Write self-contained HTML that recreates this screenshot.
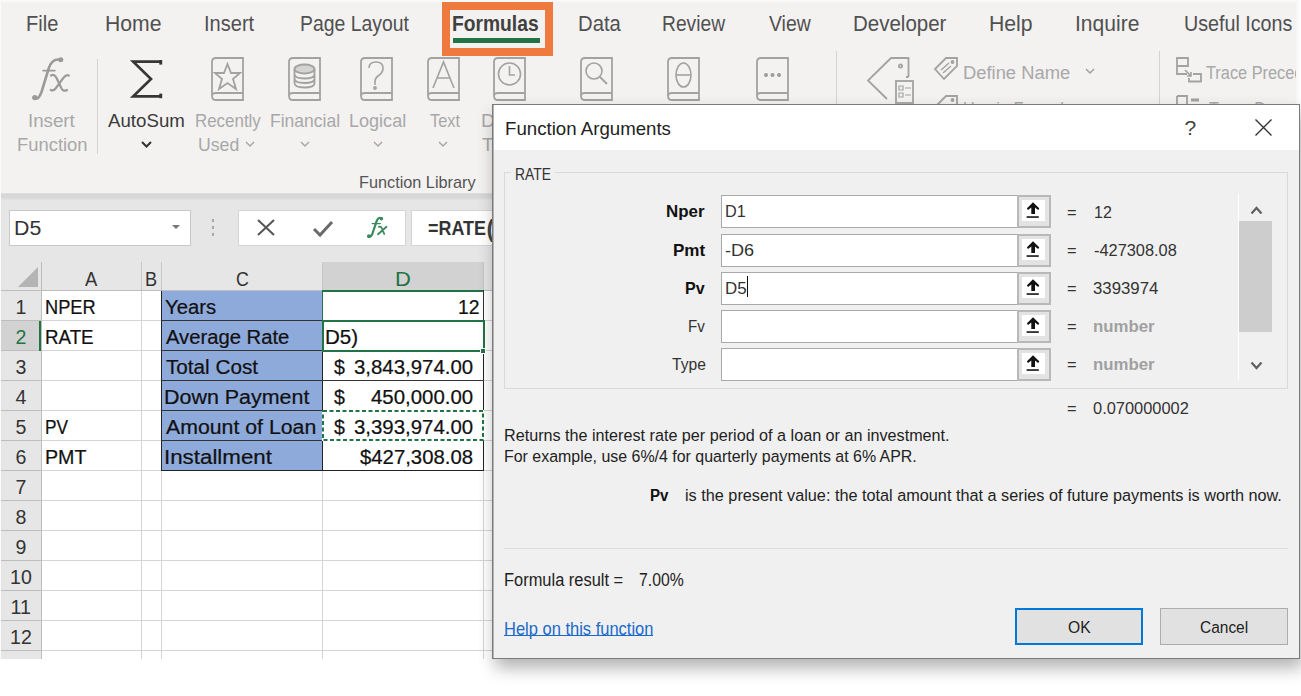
<!DOCTYPE html>
<html><head><meta charset="utf-8">
<style>
html,body{margin:0;padding:0;}
body{width:1301px;height:696px;overflow:hidden;position:relative;background:#fff;font-family:"Liberation Sans",sans-serif;}
.a{position:absolute;box-sizing:border-box;}
.t{position:absolute;line-height:1;white-space:pre;transform-origin:0 50%;font-family:"Liberation Sans",sans-serif;}
svg{position:absolute;overflow:visible;}
</style></head><body>
<!-- ribbon -->
<div class="a" style="left:0;top:0;width:1296px;height:193px;background:#f3f2f1"></div>
<div class="a" style="left:442px;top:2px;width:111px;height:54px;border:8px solid #ee7a3f"></div>
<div class="a" style="left:453px;top:38px;width:87px;height:5px;background:#217346"></div>
<div class="a" style="left:97px;top:59px;width:1px;height:95px;background:#d2d2d2"></div>
<div class="a" style="left:836px;top:51px;width:1px;height:53px;background:#d2d2d2"></div>
<div class="a" style="left:1159px;top:51px;width:1px;height:53px;background:#d2d2d2"></div>
<!-- fx icon -->
<svg style="left:25px;top:50px" width="50" height="55" viewBox="25 50 50 55"><g stroke="#9a9a9a" fill="none" stroke-linecap="round"><path d="M34.5,98 Q38.5,100.5 41.5,92 L49,67.5 Q52.5,58 60.5,59.8" stroke-width="2.6"/><path d="M43.2,70.6 H54.8" stroke-width="1.8"/><path d="M51,75.5 Q54.5,73.5 56.8,78.5 L61.5,88.5 Q63.5,92 67,90" stroke-width="2.2"/><path d="M68.8,75.5 Q66,74 63.2,78.2 L56,88 Q53.5,91.5 50.8,90" stroke-width="2.2"/></g><g fill="#9a9a9a"><circle cx="34.8" cy="97.6" r="2.7"/><circle cx="60.8" cy="59.8" r="2.5"/></g></svg>
<!-- sigma -->
<svg style="left:128px;top:56px" width="38" height="45" viewBox="128 56 38 45"><path d="M161.5,61.7 H133.2 L151,79 L133.2,96.3 H161.5" fill="none" stroke="#363636" stroke-width="2.7" stroke-linejoin="miter" stroke-miterlimit="6"/><rect x="159.3" y="60" width="2.9" height="4.6" fill="#363636"/><rect x="159.3" y="93.6" width="2.9" height="4.6" fill="#363636"/></svg>
<!-- books -->
<svg style="left:210px;top:56px" width="36" height="46" viewBox="0 0 36 46"><g fill="none" stroke="#a2a2a2" stroke-width="1.8"><path d="M2,40 V6 Q2,2 6,2 H33 V44 H6 Q2,44 2,40 Q2,37 6,37 H33"/><path d="M17.5,8 L21,17 L30,17 L23,23 L26,33 L17.5,27 L9,33 L12,23 L5,17 L14,17 Z" stroke-width="1.8"/></g></svg>
<svg style="left:287px;top:56px" width="36" height="46" viewBox="0 0 36 46"><g fill="none" stroke="#a2a2a2" stroke-width="1.8"><path d="M2,40 V6 Q2,2 6,2 H33 V44 H6 Q2,44 2,40 Q2,37 6,37 H33"/><ellipse cx="17.5" cy="13" rx="10" ry="4.5" fill="#d4d4d4"/><path d="M7.5,13 V27 Q7.5,31.5 17.5,31.5 Q27.5,31.5 27.5,27 V13 M7.5,18 Q7.5,22.5 17.5,22.5 Q27.5,22.5 27.5,18 M7.5,22.5 Q7.5,27 17.5,27 Q27.5,27 27.5,22.5"/></g></svg>
<svg style="left:359px;top:56px" width="36" height="46" viewBox="0 0 36 46"><g fill="none" stroke="#a2a2a2" stroke-width="1.8"><path d="M2,40 V6 Q2,2 6,2 H33 V44 H6 Q2,44 2,40 Q2,37 6,37 H33"/><path d="M10,12 Q10,6 17,6 Q24,6 24,12 Q24,17 19,20 Q16,22 16,26 V29" stroke-width="1.6"/><circle cx="16" cy="32" r="1" fill="#9c9c9c"/></g></svg>
<svg style="left:426px;top:56px" width="36" height="46" viewBox="0 0 36 46"><g fill="none" stroke="#a2a2a2" stroke-width="1.8"><path d="M2,40 V6 Q2,2 6,2 H33 V44 H6 Q2,44 2,40 Q2,37 6,37 H33"/><path d="M7,32 L17.5,6 L28,32 M11,22 H24" stroke-width="1.6"/></g></svg>
<svg style="left:492px;top:56px" width="36" height="46" viewBox="0 0 36 46"><g fill="none" stroke="#a2a2a2" stroke-width="1.8"><path d="M2,40 V6 Q2,2 6,2 H33 V44 H6 Q2,44 2,40 Q2,37 6,37 H33"/><circle cx="17.5" cy="18" r="11" stroke-width="1.6"/><path d="M17.5,10 V19 H23" stroke-width="1.6"/></g></svg>
<svg style="left:579px;top:56px" width="36" height="46" viewBox="0 0 36 46"><g fill="none" stroke="#a2a2a2" stroke-width="1.8"><path d="M2,40 V6 Q2,2 6,2 H33 V44 H6 Q2,44 2,40 Q2,37 6,37 H33"/><circle cx="15" cy="15" r="8" stroke-width="1.6"/><path d="M20.5,20.5 L28,28" stroke-width="1.8"/></g></svg>
<svg style="left:666px;top:56px" width="36" height="46" viewBox="0 0 36 46"><g fill="none" stroke="#a2a2a2" stroke-width="1.8"><path d="M2,40 V6 Q2,2 6,2 H33 V44 H6 Q2,44 2,40 Q2,37 6,37 H33"/><ellipse cx="17.5" cy="19" rx="7.5" ry="12" stroke-width="1.6"/><path d="M10,19 H25" stroke-width="1.6"/></g></svg>
<svg style="left:755px;top:56px" width="36" height="46" viewBox="0 0 36 46"><g fill="none" stroke="#a2a2a2" stroke-width="1.8"><path d="M2,40 V6 Q2,2 6,2 H33 V44 H6 Q2,44 2,40 Q2,37 6,37 H33"/></g><g fill="#9c9c9c"><circle cx="11" cy="19" r="2"/><circle cx="17.5" cy="19" r="2"/><circle cx="24" cy="19" r="2"/></g></svg>
<!-- name manager big tag -->
<svg style="left:866px;top:56px" width="50" height="50" viewBox="0 0 50 50"><g fill="none" stroke="#a2a2a2" stroke-width="1.8"><path d="M42.5,21 H40 M42.5,21 V2 H25 L2,24.5 L21,43"/><circle cx="34.5" cy="10" r="1.6"/><rect x="30" y="25" width="17" height="22"/><path d="M33,30 h4 v4 h-4 z M33,37 h4 v4 h-4 z M39,32 h6 M39,39 h6" stroke-width="1.2"/></g></svg>
<!-- define name small tag -->
<svg style="left:933px;top:56px" width="26" height="26" viewBox="0 0 26 26"><g fill="none" stroke="#a2a2a2" stroke-width="1.8"><path d="M24,2 H13 L2,13 L11,23 L24,10 Z"/><circle cx="19.5" cy="6" r="1" fill="#9c9c9c"/><path d="M8,14 L16,7 M10,17 L18,10" stroke-width="1.4"/></g></svg>
<svg style="left:933px;top:94px" width="26" height="26" viewBox="0 0 26 26"><g fill="none" stroke="#a2a2a2" stroke-width="1.8"><path d="M24,2 H13 L2,13 L11,23 L24,10 Z"/><circle cx="19.5" cy="6" r="1" fill="#9c9c9c"/></g></svg>
<svg style="left:1085px;top:68px" width="10" height="6" viewBox="0 0 10 6"><path d="M1,1 L5,5 L9,1" fill="none" stroke="#a0a0a0" stroke-width="1.5"/></svg>
<!-- trace precedents -->
<svg style="left:1175px;top:56px" width="28" height="28" viewBox="0 0 28 28"><g fill="none" stroke="#a2a2a2" stroke-width="1.8"><path d="M2,2 H13 V10 H2 Z M2,10 V18 H12"/><path d="M10,14 L16,20 M12,20 H16 V16" stroke-width="1.6"/><path d="M18,18 H26 V25.5 H14 V22"/></g></svg>
<svg style="left:1175px;top:94px" width="28" height="12" viewBox="0 0 28 12"><g fill="none" stroke="#a2a2a2" stroke-width="1.8"><path d="M2,2 H12 V12 M2,2 V12"/><path d="M16,6 H24" stroke-width="3"/></g></svg>
<!-- chevrons -->
<svg style="left:141px;top:141px" width="11" height="7" viewBox="0 0 11 7"><path d="M1,1 L5.5,5.5 L10,1" fill="none" stroke="#333" stroke-width="2"/></svg>
<svg style="left:245px;top:141px" width="10" height="7" viewBox="0 0 10 7"><path d="M1,1 L5,5 L9,1" fill="none" stroke="#a8a8a8" stroke-width="1.5"/></svg>
<svg style="left:300px;top:141px" width="10" height="7" viewBox="0 0 10 7"><path d="M1,1 L5,5 L9,1" fill="none" stroke="#a8a8a8" stroke-width="1.5"/></svg>
<svg style="left:373px;top:141px" width="10" height="7" viewBox="0 0 10 7"><path d="M1,1 L5,5 L9,1" fill="none" stroke="#a8a8a8" stroke-width="1.5"/></svg>
<svg style="left:438px;top:141px" width="10" height="7" viewBox="0 0 10 7"><path d="M1,1 L5,5 L9,1" fill="none" stroke="#a8a8a8" stroke-width="1.5"/></svg>

<!-- formula bar -->
<div class="a" style="left:0;top:193px;width:1296px;height:69px;background:#e6e6e6"></div>
<div class="a" style="left:0;top:193px;width:1296px;height:7px;background:linear-gradient(#e2e2e2 0px,#d6d6d6 1.5px,#d8d8d8 5px,#e4e4e4 7px)"></div>
<div class="a" style="left:9px;top:210px;width:182px;height:36px;background:#fff;border:1px solid #c8c8c8"></div>
<svg style="left:171px;top:224px" width="10" height="6" viewBox="0 0 10 6"><path d="M1,1 H9 L5,5 Z" fill="#777"/></svg>
<div class="a" style="left:212px;top:219px;width:2px;height:3px;background:#a8a8a8"></div>
<div class="a" style="left:212px;top:226px;width:2px;height:3px;background:#a8a8a8"></div>
<div class="a" style="left:212px;top:233px;width:2px;height:3px;background:#a8a8a8"></div>
<div class="a" style="left:238px;top:210px;width:168px;height:36px;background:#fff;border:1px solid #d4d4d4"></div>
<svg style="left:256px;top:219px" width="20" height="17" viewBox="0 0 20 17"><path d="M2,1 L18,16 M18,1 L2,16" fill="none" stroke="#555" stroke-width="2"/></svg>
<svg style="left:312px;top:220px" width="22" height="17" viewBox="0 0 22 17"><path d="M2,9 L8,15 L20,2" fill="none" stroke="#6a6a6a" stroke-width="3"/></svg>
<svg style="left:360px;top:212px" width="32" height="30" viewBox="360 212 32 30"><g stroke="#3b8a5c" fill="none" stroke-linecap="round"><path d="M368.5,236.5 Q371.5,237.5 373,232 L376.5,221.5 Q378.5,216.5 381.5,218.2" stroke-width="2.2"/><path d="M372.2,223.6 H380.3" stroke-width="1.4"/><path d="M378.8,226.8 Q381,226 382,228.5 L384.2,234 M386.5,226.8 L378,234.2" stroke-width="1.8"/></g><g fill="#3b8a5c"><circle cx="368.9" cy="236.2" r="1.9"/><circle cx="381.4" cy="218.7" r="1.8"/></g></svg>
<div class="a" style="left:411px;top:210px;width:100px;height:36px;background:#fff;border:1px solid #d4d4d4"></div>

<!-- sheet -->
<div class="a" style="left:0;top:262px;width:1296px;height:397px;background:#fff"></div>
<div class="a" style="left:0;top:262px;width:1296px;height:29px;background:#e6e6e6"></div>
<div class="a" style="left:322px;top:262px;width:162px;height:29px;background:#d2d2d2"></div>
<div class="a" style="left:0;top:262px;width:41px;height:397px;background:#e6e6e6"></div>
<div class="a" style="left:0;top:321px;width:41px;height:30px;background:#d2d2d2"></div>
<svg style="left:17px;top:266px" width="22" height="22" viewBox="0 0 22 22"><path d="M21,1 V21 H1 Z" fill="#b4b4b4"/></svg>
<!-- gridlines -->
<div id="grid"></div>
<div class="a" style="left:41px;top:290px;width:1255px;height:1px;background:#d4d4d4"></div>
<div class="a" style="left:0;top:290px;width:41px;height:1px;background:#bdbdbd"></div>
<div class="a" style="left:41px;top:320px;width:1255px;height:1px;background:#d4d4d4"></div>
<div class="a" style="left:0;top:320px;width:41px;height:1px;background:#bdbdbd"></div>
<div class="a" style="left:41px;top:350px;width:1255px;height:1px;background:#d4d4d4"></div>
<div class="a" style="left:0;top:350px;width:41px;height:1px;background:#bdbdbd"></div>
<div class="a" style="left:41px;top:380px;width:1255px;height:1px;background:#d4d4d4"></div>
<div class="a" style="left:0;top:380px;width:41px;height:1px;background:#bdbdbd"></div>
<div class="a" style="left:41px;top:410px;width:1255px;height:1px;background:#d4d4d4"></div>
<div class="a" style="left:0;top:410px;width:41px;height:1px;background:#bdbdbd"></div>
<div class="a" style="left:41px;top:440px;width:1255px;height:1px;background:#d4d4d4"></div>
<div class="a" style="left:0;top:440px;width:41px;height:1px;background:#bdbdbd"></div>
<div class="a" style="left:41px;top:470px;width:1255px;height:1px;background:#d4d4d4"></div>
<div class="a" style="left:0;top:470px;width:41px;height:1px;background:#bdbdbd"></div>
<div class="a" style="left:41px;top:500px;width:1255px;height:1px;background:#d4d4d4"></div>
<div class="a" style="left:0;top:500px;width:41px;height:1px;background:#bdbdbd"></div>
<div class="a" style="left:41px;top:530px;width:1255px;height:1px;background:#d4d4d4"></div>
<div class="a" style="left:0;top:530px;width:41px;height:1px;background:#bdbdbd"></div>
<div class="a" style="left:41px;top:560px;width:1255px;height:1px;background:#d4d4d4"></div>
<div class="a" style="left:0;top:560px;width:41px;height:1px;background:#bdbdbd"></div>
<div class="a" style="left:41px;top:590px;width:1255px;height:1px;background:#d4d4d4"></div>
<div class="a" style="left:0;top:590px;width:41px;height:1px;background:#bdbdbd"></div>
<div class="a" style="left:41px;top:620px;width:1255px;height:1px;background:#d4d4d4"></div>
<div class="a" style="left:0;top:620px;width:41px;height:1px;background:#bdbdbd"></div>
<div class="a" style="left:41px;top:650px;width:1255px;height:1px;background:#d4d4d4"></div>
<div class="a" style="left:0;top:650px;width:41px;height:1px;background:#bdbdbd"></div>
<div class="a" style="left:0;top:290px;width:1296px;height:1px;background:#bdbdbd"></div>
<div class="a" style="left:141px;top:291px;width:1px;height:368px;background:#d4d4d4"></div>
<div class="a" style="left:141px;top:262px;width:1px;height:28px;background:#c6c6c6"></div>
<div class="a" style="left:161px;top:291px;width:1px;height:368px;background:#d4d4d4"></div>
<div class="a" style="left:161px;top:262px;width:1px;height:28px;background:#c6c6c6"></div>
<div class="a" style="left:322px;top:291px;width:1px;height:368px;background:#d4d4d4"></div>
<div class="a" style="left:322px;top:262px;width:1px;height:28px;background:#c6c6c6"></div>
<div class="a" style="left:483px;top:291px;width:1px;height:368px;background:#d4d4d4"></div>
<div class="a" style="left:483px;top:262px;width:1px;height:28px;background:#c6c6c6"></div>
<div class="a" style="left:41px;top:262px;width:1px;height:397px;background:#bdbdbd"></div>
<!-- C blue block -->
<div class="a" style="left:161px;top:291px;width:162px;height:180px;background:#8eaadb;border:1px solid #222;border-top:none"></div>
<div class="a" style="left:161px;top:320px;width:162px;height:1px;background:#333"></div>
<div class="a" style="left:161px;top:350px;width:162px;height:1px;background:#333"></div>
<div class="a" style="left:161px;top:380px;width:162px;height:1px;background:#333"></div>
<div class="a" style="left:161px;top:410px;width:162px;height:1px;background:#333"></div>
<div class="a" style="left:161px;top:440px;width:162px;height:1px;background:#333"></div>
<!-- D cells borders -->
<div class="a" style="left:322px;top:350px;width:162px;height:121px;border:1px solid #222;border-top:none"></div>
<div class="a" style="left:322px;top:380px;width:162px;height:1px;background:#333"></div>
<div class="a" style="left:322px;top:410px;width:162px;height:1px;background:#333"></div>
<div class="a" style="left:322px;top:440px;width:162px;height:1px;background:#333"></div>
<div class="a" style="left:322px;top:290px;width:162px;height:2px;background:#217346"></div>
<div class="a" style="left:322px;top:290px;width:162px;height:31px;border:1px solid #217346;border-top:none;border-right-color:#333"></div>
<div class="a" style="left:322px;top:320px;width:163px;height:32px;border:2px solid #217346"></div>
<div class="a" style="left:480px;top:348px;width:6px;height:6px;background:#217346;border:1px solid #fff"></div>
<div class="a" style="left:39px;top:321px;width:2px;height:30px;background:#217346"></div>
<div class="a" style="left:322px;top:410px;width:162px;height:31px;background:#fff"></div>
<svg style="left:322px;top:410px" width="162" height="31" viewBox="0 0 162 31"><rect x="1" y="1" width="160" height="29" fill="none" stroke="#217346" stroke-width="2" stroke-dasharray="4 2.5"/></svg>

<span class="t" style="left:26.16px;top:13.00px;font-size:21.74px;color:#505050;transform:scaleX(0.9219);">File</span>
<span class="t" style="left:105.05px;top:13.00px;font-size:21.74px;color:#505050;transform:scaleX(0.9745);">Home</span>
<span class="t" style="left:204.15px;top:13.00px;font-size:21.74px;color:#505050;transform:scaleX(0.9231);">Insert</span>
<span class="t" style="left:300.22px;top:13.00px;font-size:21.74px;color:#505050;transform:scaleX(0.8917);">Page Layout</span>
<span class="t" style="left:452.11px;top:13.00px;font-size:21.74px;color:#404040;font-weight:700;transform:scaleX(0.8854);">Formulas</span>
<span class="t" style="left:578.14px;top:13.00px;font-size:21.74px;color:#505050;transform:scaleX(0.9318);">Data</span>
<span class="t" style="left:662.23px;top:13.00px;font-size:21.74px;color:#505050;transform:scaleX(0.8841);">Review</span>
<span class="t" style="left:769.00px;top:13.00px;font-size:21.74px;color:#505050;transform:scaleX(0.8936);">View</span>
<span class="t" style="left:852.61px;top:13.00px;font-size:21.74px;color:#505050;transform:scaleX(0.9433);">Developer</span>
<span class="t" style="left:989.05px;top:13.00px;font-size:21.74px;color:#505050;transform:scaleX(0.9762);">Help</span>
<span class="t" style="left:1075.06px;top:13.00px;font-size:21.74px;color:#505050;transform:scaleX(0.9688);">Inquire</span>
<span class="t" style="left:1184.19px;top:13.00px;font-size:21.74px;color:#505050;transform:scaleX(0.9060);">Useful Icons</span>
<span class="t" style="left:27.58px;top:112.00px;font-size:18.55px;color:#a8a8a8;transform:scaleX(1.0091);">Insert</span>
<span class="t" style="left:16.62px;top:136.00px;font-size:18.84px;color:#a8a8a8;transform:scaleX(0.9771);">Function</span>
<span class="t" style="left:108.00px;top:112.00px;font-size:18.55px;color:#3a3a3a;transform:scaleX(1.0080);">AutoSum</span>
<span class="t" style="left:194.69px;top:112.00px;font-size:18.55px;color:#a8a8a8;transform:scaleX(0.9127);">Recently</span>
<span class="t" style="left:198.06px;top:136.00px;font-size:18.84px;color:#a8a8a8;transform:scaleX(0.9381);">Used</span>
<span class="t" style="left:270.31px;top:112.00px;font-size:18.55px;color:#a8a8a8;transform:scaleX(0.9444);">Financial</span>
<span class="t" style="left:349.03px;top:112.00px;font-size:18.55px;color:#a8a8a8;transform:scaleX(0.9737);">Logical</span>
<span class="t" style="left:429.50px;top:112.00px;font-size:18.55px;color:#a8a8a8;transform:scaleX(0.8824);">Text</span>
<span class="t" style="left:481.46px;top:112.00px;font-size:18.55px;color:#a8a8a8;transform:scaleX(1.0417);">D</span>
<span class="t" style="left:482.00px;top:136.00px;font-size:18.84px;color:#a8a8a8;">T</span>
<span class="t" style="left:358.56px;top:174.00px;font-size:17.39px;color:#555;transform:scaleX(0.9355);">Function Library</span>
<span class="t" style="left:962.63px;top:63.00px;font-size:18.99px;color:#a8a8a8;transform:scaleX(0.9670);">Define Name</span>
<span class="t" style="left:1205.50px;top:63.00px;font-size:18.99px;color:#a8a8a8;transform:scaleX(0.8600);">Trace Precedents</span>
<span class="t" style="left:962.74px;top:100.00px;font-size:18.84px;color:#a8a8a8;transform:scaleX(0.8600);">Use in Formula</span>
<span class="t" style="left:1209.00px;top:100.00px;font-size:18.84px;color:#a8a8a8;transform:scaleX(0.8600);">Trace Dependents</span>
<span class="t" style="left:13.82px;top:219.00px;font-size:19.57px;color:#333;transform:scaleX(1.0909);">D5</span>
<span class="t" style="left:428.12px;top:218.00px;font-size:20.29px;color:#333;font-weight:700;transform:scaleX(0.8828);">=RATE</span>
<span class="t" style="left:486.50px;top:218.00px;font-size:23.19px;color:#444;font-weight:700;">(</span>
<span class="t" style="left:85.40px;top:268.00px;font-size:21.01px;color:#333;transform:scaleX(0.8786);">A</span>
<span class="t" style="left:144.87px;top:268.00px;font-size:21.01px;color:#333;transform:scaleX(0.8636);">B</span>
<span class="t" style="left:235.92px;top:269.00px;font-size:20.29px;color:#333;transform:scaleX(0.8769);">C</span>
<span class="t" style="left:394.83px;top:269.00px;font-size:20.29px;color:#217346;transform:scaleX(1.0833);">D</span>
<span class="t" style="left:15.50px;top:298.00px;font-size:19.57px;color:#333;">1</span>
<span class="t" style="left:15.50px;top:328.00px;font-size:19.57px;color:#217346;">2</span>
<span class="t" style="left:15.50px;top:358.00px;font-size:19.57px;color:#333;">3</span>
<span class="t" style="left:15.50px;top:388.00px;font-size:19.57px;color:#333;">4</span>
<span class="t" style="left:15.50px;top:418.00px;font-size:19.57px;color:#333;">5</span>
<span class="t" style="left:15.50px;top:448.00px;font-size:19.57px;color:#333;">6</span>
<span class="t" style="left:15.50px;top:478.00px;font-size:19.57px;color:#333;">7</span>
<span class="t" style="left:15.50px;top:508.00px;font-size:19.57px;color:#333;">8</span>
<span class="t" style="left:15.50px;top:538.00px;font-size:19.57px;color:#333;">9</span>
<span class="t" style="left:10.00px;top:568.00px;font-size:19.57px;color:#333;">10</span>
<span class="t" style="left:10.50px;top:598.00px;font-size:19.57px;color:#333;">11</span>
<span class="t" style="left:10.00px;top:628.00px;font-size:19.57px;color:#333;">12</span>
<span class="t" style="left:44.94px;top:298.00px;font-size:19.57px;color:#111;transform:scaleX(0.9314);-webkit-text-stroke:0.22px #111;">NPER</span>
<span class="t" style="left:44.88px;top:328.00px;font-size:19.57px;color:#111;transform:scaleX(0.9583);-webkit-text-stroke:0.22px #111;">RATE</span>
<span class="t" style="left:45.03px;top:418.00px;font-size:19.57px;color:#111;transform:scaleX(0.8833);-webkit-text-stroke:0.22px #111;">PV</span>
<span class="t" style="left:44.79px;top:448.00px;font-size:19.57px;color:#111;transform:scaleX(1.0051);-webkit-text-stroke:0.22px #111;">PMT</span>
<span class="t" style="left:164.96px;top:298.00px;font-size:19.57px;color:#111;transform:scaleX(1.0375);-webkit-text-stroke:0.22px #111;">Years</span>
<span class="t" style="left:166.00px;top:328.00px;font-size:19.57px;color:#111;transform:scaleX(1.0339);-webkit-text-stroke:0.22px #111;">Average Rate</span>
<span class="t" style="left:166.00px;top:358.00px;font-size:19.57px;color:#111;transform:scaleX(1.0575);-webkit-text-stroke:0.22px #111;">Total Cost</span>
<span class="t" style="left:163.81px;top:388.00px;font-size:19.57px;color:#111;transform:scaleX(1.0962);-webkit-text-stroke:0.22px #111;">Down Payment</span>
<span class="t" style="left:166.00px;top:418.00px;font-size:19.57px;color:#111;transform:scaleX(1.0876);-webkit-text-stroke:0.22px #111;">Amount of Loan</span>
<span class="t" style="left:163.72px;top:448.00px;font-size:19.57px;color:#111;transform:scaleX(1.1413);-webkit-text-stroke:0.22px #111;">Installment</span>
<span class="t" style="left:458.05px;top:297.00px;font-size:20.29px;color:#111;transform:scaleX(0.9524);-webkit-text-stroke:0.22px #111;">12</span>
<span class="t" style="left:324.90px;top:328.00px;font-size:19.57px;color:#111;transform:scaleX(1.0517);-webkit-text-stroke:0.22px #111;">D5)</span>
<span class="t" style="left:334.00px;top:358.00px;font-size:19.57px;color:#111;-webkit-text-stroke:0.22px #111;">$</span>
<span class="t" style="left:353.66px;top:358.00px;font-size:19.57px;color:#111;transform:scaleX(1.0434);-webkit-text-stroke:0.22px #111;">3,843,974.00</span>
<span class="t" style="left:334.00px;top:388.00px;font-size:19.57px;color:#111;-webkit-text-stroke:0.22px #111;">$</span>
<span class="t" style="left:371.40px;top:388.00px;font-size:19.57px;color:#111;transform:scaleX(1.0433);-webkit-text-stroke:0.22px #111;">450,000.00</span>
<span class="t" style="left:334.00px;top:418.00px;font-size:19.57px;color:#111;-webkit-text-stroke:0.22px #111;">$</span>
<span class="t" style="left:353.66px;top:418.00px;font-size:19.57px;color:#111;transform:scaleX(1.0434);-webkit-text-stroke:0.22px #111;">3,393,974.00</span>
<span class="t" style="left:360.40px;top:448.00px;font-size:19.57px;color:#111;transform:scaleX(1.0389);-webkit-text-stroke:0.22px #111;">$427,308.08</span>

<!-- edges -->
<div class="a" style="left:0;top:0;width:1301px;height:2px;background:#f9f9f9"></div>
<div class="a" style="left:0;top:0;width:1px;height:659px;background:#fafafa"></div>
<div class="a" style="left:1296px;top:0;width:5px;height:659px;background:linear-gradient(90deg,#f6f6f6,#fff)"></div>
<!-- dialog -->
<div class="a" style="left:492px;top:104px;width:808px;height:555px;background:#f0f0f0;border:1px solid #7a7a7a;box-shadow:3px 9px 16px rgba(0,0,0,0.30)"></div>
<div class="a" style="left:493px;top:105px;width:806px;height:45px;background:#fff"></div>
<div class="a" style="left:493px;top:105px;width:1px;height:553px;background:#b4b4b4"></div>
<div id="dlg"></div>
<svg style="left:1255px;top:119px" width="17" height="17" viewBox="0 0 17 17"><path d="M0.5,0.5 L16.5,16.5 M16.5,0.5 L0.5,16.5" fill="none" stroke="#333" stroke-width="1.4"/></svg>
<div class="a" style="left:504px;top:172px;width:784px;height:217px;border:1px solid #dadada"></div>
<div class="a" style="left:511px;top:166px;width:44px;height:12px;background:#f0f0f0"></div>
<div class="a" style="left:721px;top:195px;width:297px;height:33px;background:#fff;border:1px solid #a9a9a9;border-right:none"></div>
<div class="a" style="left:1017px;top:195px;width:34px;height:33px;background:#e3e3e3;border:2px solid #b8b8b8"></div>
<div class="a" style="left:1022px;top:200px;width:23px;height:21px;background:#fff"></div>
<svg style="left:1026px;top:202px" width="14" height="17" viewBox="0 0 14 17"><path d="M7,0.3 L13.2,6.3 Q13.3,7.9 11.8,7.7 L9,5.6 V12 H5.3 V5.6 L2.4,7.7 Q0.9,7.9 1,6.3 Z" fill="#111"/><rect x="0.6" y="14.2" width="12.2" height="1.7" fill="#222"/></svg>
<div class="a" style="left:721px;top:234px;width:297px;height:33px;background:#fff;border:1px solid #a9a9a9;border-right:none"></div>
<div class="a" style="left:1017px;top:234px;width:34px;height:33px;background:#e3e3e3;border:2px solid #b8b8b8"></div>
<div class="a" style="left:1022px;top:239px;width:23px;height:21px;background:#fff"></div>
<svg style="left:1026px;top:241px" width="14" height="17" viewBox="0 0 14 17"><path d="M7,0.3 L13.2,6.3 Q13.3,7.9 11.8,7.7 L9,5.6 V12 H5.3 V5.6 L2.4,7.7 Q0.9,7.9 1,6.3 Z" fill="#111"/><rect x="0.6" y="14.2" width="12.2" height="1.7" fill="#222"/></svg>
<div class="a" style="left:721px;top:272px;width:297px;height:33px;background:#fff;border:1px solid #a9a9a9;border-right:none"></div>
<div class="a" style="left:1017px;top:272px;width:34px;height:33px;background:#e3e3e3;border:2px solid #b8b8b8"></div>
<div class="a" style="left:1022px;top:277px;width:23px;height:21px;background:#fff"></div>
<svg style="left:1026px;top:279px" width="14" height="17" viewBox="0 0 14 17"><path d="M7,0.3 L13.2,6.3 Q13.3,7.9 11.8,7.7 L9,5.6 V12 H5.3 V5.6 L2.4,7.7 Q0.9,7.9 1,6.3 Z" fill="#111"/><rect x="0.6" y="14.2" width="12.2" height="1.7" fill="#222"/></svg>
<div class="a" style="left:721px;top:310px;width:297px;height:33px;background:#fff;border:1px solid #a9a9a9;border-right:none"></div>
<div class="a" style="left:1017px;top:310px;width:34px;height:33px;background:#e3e3e3;border:2px solid #b8b8b8"></div>
<div class="a" style="left:1022px;top:315px;width:23px;height:21px;background:#fff"></div>
<svg style="left:1026px;top:317px" width="14" height="17" viewBox="0 0 14 17"><path d="M7,0.3 L13.2,6.3 Q13.3,7.9 11.8,7.7 L9,5.6 V12 H5.3 V5.6 L2.4,7.7 Q0.9,7.9 1,6.3 Z" fill="#111"/><rect x="0.6" y="14.2" width="12.2" height="1.7" fill="#222"/></svg>
<div class="a" style="left:721px;top:348px;width:297px;height:33px;background:#fff;border:1px solid #a9a9a9;border-right:none"></div>
<div class="a" style="left:1017px;top:348px;width:34px;height:33px;background:#e3e3e3;border:2px solid #b8b8b8"></div>
<div class="a" style="left:1022px;top:353px;width:23px;height:21px;background:#fff"></div>
<svg style="left:1026px;top:355px" width="14" height="17" viewBox="0 0 14 17"><path d="M7,0.3 L13.2,6.3 Q13.3,7.9 11.8,7.7 L9,5.6 V12 H5.3 V5.6 L2.4,7.7 Q0.9,7.9 1,6.3 Z" fill="#111"/><rect x="0.6" y="14.2" width="12.2" height="1.7" fill="#222"/></svg>
<div class="a" style="left:747px;top:276px;width:1px;height:21px;background:#111"></div>
<div class="a" style="left:1238px;top:194px;width:1px;height:186px;background:#fff"></div>
<div class="a" style="left:1239px;top:221px;width:33px;height:111px;background:#cdcdcd"></div>
<svg style="left:1250px;top:206px" width="13" height="9" viewBox="0 0 13 9"><path d="M1.5,7.5 L6.5,2 L11.5,7.5" fill="none" stroke="#606060" stroke-width="2.2"/></svg>
<svg style="left:1250px;top:361px" width="13" height="9" viewBox="0 0 13 9"><path d="M1.5,1.5 L6.5,7 L11.5,1.5" fill="none" stroke="#606060" stroke-width="2.2"/></svg>
<div class="a" style="left:504px;top:548px;width:784px;height:1px;background:#dcdcdc"></div>
<div class="a" style="left:504px;top:635px;width:149px;height:1px;background:#1b6ac9"></div>
<div class="a" style="left:1015px;top:608px;width:128px;height:37px;background:#e1e1e1;border:2px solid #0078d7"></div>
<div class="a" style="left:1160px;top:608px;width:128px;height:37px;background:#e1e1e1;border:1px solid #adadad"></div>
<span class="t" style="left:505.01px;top:120.00px;font-size:18.84px;color:#222;transform:scaleX(0.9910);">Function Arguments</span>
<span class="t" style="left:1184.50px;top:117.00px;font-size:21.00px;color:#444;">?</span>
<span class="t" style="left:514.67px;top:167.00px;font-size:16.67px;color:#333;transform:scaleX(0.8333);">RATE</span>
<span class="t" style="left:665.96px;top:203.00px;font-size:16.23px;color:#111;font-weight:700;transform:scaleX(1.0417);">Nper</span>
<span class="t" style="left:672.69px;top:242.00px;font-size:16.09px;color:#111;font-weight:700;transform:scaleX(1.0603);">Pmt</span>
<span class="t" style="left:685.00px;top:280.00px;font-size:16.09px;color:#111;font-weight:700;">Pv</span>
<span class="t" style="left:688.06px;top:318.00px;font-size:16.09px;color:#333;transform:scaleX(0.9412);">Fv</span>
<span class="t" style="left:672.00px;top:356.00px;font-size:16.09px;color:#333;transform:scaleX(0.9706);">Type</span>
<span class="t" style="left:725.00px;top:203.00px;font-size:16.23px;color:#333;">D1</span>
<span class="t" style="left:724.88px;top:242.00px;font-size:16.09px;color:#333;transform:scaleX(1.1250);">-D6</span>
<span class="t" style="left:724.95px;top:280.00px;font-size:16.09px;color:#333;transform:scaleX(1.0526);">D5</span>
<span class="t" style="left:1067.10px;top:204.00px;font-size:16.38px;color:#333;">=</span>
<span class="t" style="left:1067.10px;top:242.00px;font-size:16.38px;color:#333;">=</span>
<span class="t" style="left:1067.10px;top:280.00px;font-size:16.38px;color:#333;">=</span>
<span class="t" style="left:1067.10px;top:318.00px;font-size:16.38px;color:#333;">=</span>
<span class="t" style="left:1067.10px;top:356.00px;font-size:16.38px;color:#333;">=</span>
<span class="t" style="left:1067.10px;top:400.00px;font-size:16.38px;color:#333;">=</span>
<span class="t" style="left:1094.04px;top:205.00px;font-size:16.67px;color:#333;transform:scaleX(0.9588);">12</span>
<span class="t" style="left:1093.98px;top:242.00px;font-size:16.09px;color:#333;transform:scaleX(1.0175);">-427308.08</span>
<span class="t" style="left:1093.16px;top:280.00px;font-size:16.09px;color:#333;transform:scaleX(1.0443);">3393974</span>
<span class="t" style="left:1092.98px;top:319.00px;font-size:16.52px;color:#a0a0a0;font-weight:700;transform:scaleX(1.0167);">number</span>
<span class="t" style="left:1092.98px;top:357.00px;font-size:16.52px;color:#a0a0a0;font-weight:700;transform:scaleX(1.0167);">number</span>
<span class="t" style="left:1093.01px;top:401.00px;font-size:16.67px;color:#333;transform:scaleX(0.9854);">0.070000002</span>
<span class="t" style="left:504.01px;top:427.00px;font-size:16.30px;color:#222;transform:scaleX(0.9926);">Returns the interest rate per period of a loan or an investment.</span>
<span class="t" style="left:504.00px;top:449.00px;font-size:15.94px;color:#222;">For example, use 6%/4 for quarterly payments at 6% APR.</span>
<span class="t" style="left:649.80px;top:488.00px;font-size:15.94px;color:#111;font-weight:700;transform:scaleX(0.9474);">Pv</span>
<span class="t" style="left:684.73px;top:488.00px;font-size:15.94px;color:#222;transform:scaleX(1.0193);">is the present value: the total amount that a series of future payments is worth now.</span>
<span class="t" style="left:503.59px;top:571.00px;font-size:18.12px;color:#222;transform:scaleX(0.9077);">Formula result =</span>
<span class="t" style="left:638.63px;top:571.00px;font-size:18.12px;color:#222;transform:scaleX(0.8700);">7.00%</span>
<span class="t" style="left:503.62px;top:620.00px;font-size:18.84px;color:#1b6ac9;transform:scaleX(0.8757);">Help on this function</span>
<span class="t" style="left:1067.53px;top:619.00px;font-size:16.23px;color:#222;transform:scaleX(0.9659);">OK</span>
<span class="t" style="left:1199.55px;top:619.00px;font-size:16.23px;color:#222;transform:scaleX(0.9541);">Cancel</span>
</body></html>
